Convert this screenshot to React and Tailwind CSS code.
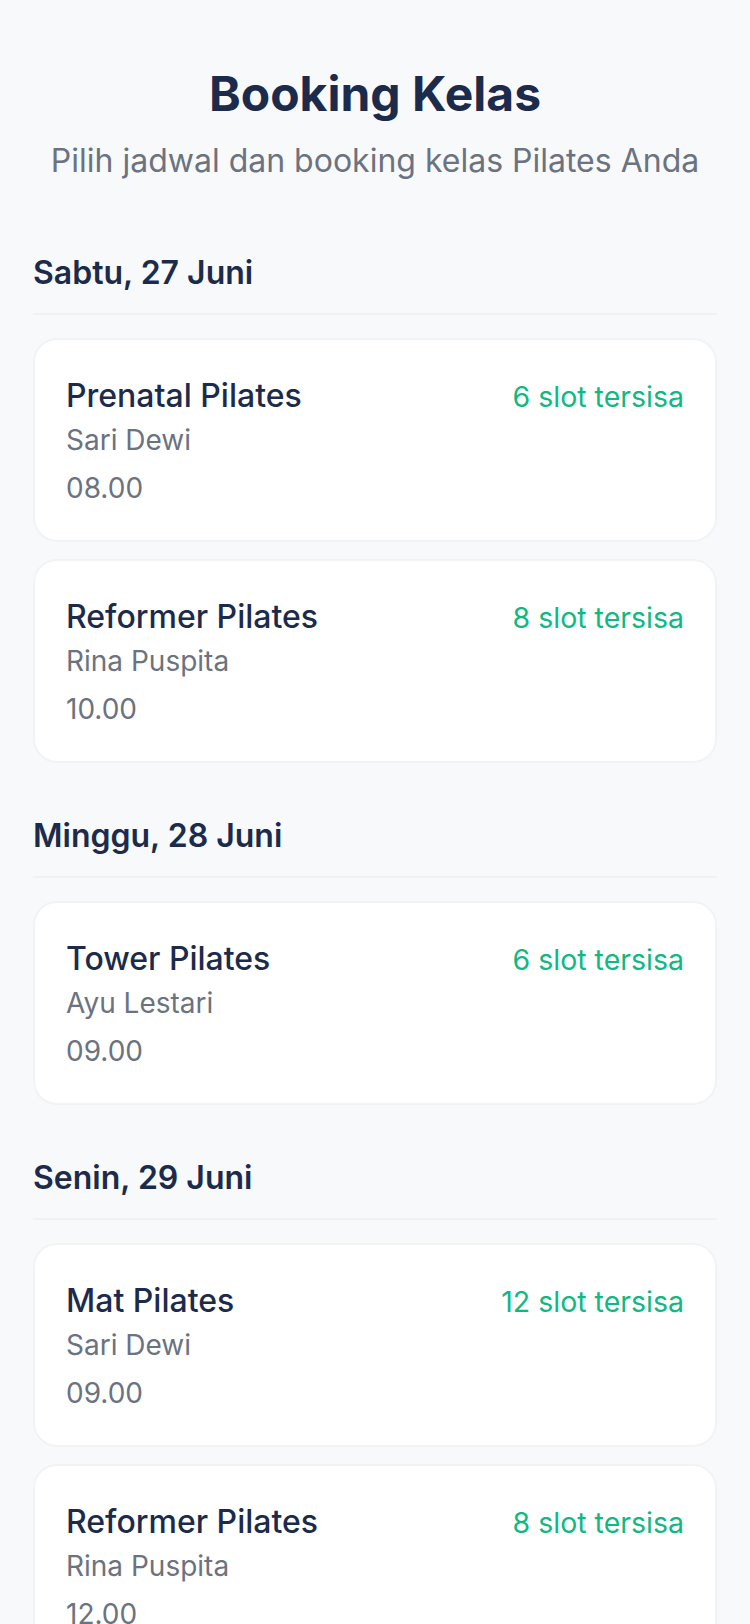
const schedule = [
    {
        date: "Sabtu, 27 Juni",
        classes: [
            { name: "Prenatal Pilates", instructor: "Sari Dewi", time: "08.00", slots: 6 },
            { name: "Reformer Pilates", instructor: "Rina Puspita", time: "10.00", slots: 8 },
        ],
    },
    {
        date: "Minggu, 28 Juni",
        classes: [
            { name: "Tower Pilates", instructor: "Ayu Lestari", time: "09.00", slots: 6 },
        ],
    },
    {
        date: "Senin, 29 Juni",
        classes: [
            { name: "Mat Pilates", instructor: "Sari Dewi", time: "09.00", slots: 12 },
            { name: "Reformer Pilates", instructor: "Rina Puspita", time: "12.00", slots: 8 },
        ],
    },
];

function ClassCard({ item }) {
    return (
        <div className="bg-white border-2 border-[#f1f3f5] rounded-[24px] px-[31px] py-[32px]">
            <div className="flex items-baseline justify-between">
                <h3 className="text-[32px] leading-[48px] font-medium text-[#1c2b4b]">
                    {item.name}
                </h3>
                <span className="text-[28.5px] leading-none text-[#10b981]">
                    {item.slots} slot tersisa
                </span>
            </div>
            <p className="text-[28px] leading-[40px] text-[#6b7280]">
                {item.instructor}
            </p>
            <p className="mt-2 text-[28px] leading-[40px] text-[#6b7280]">
                {item.time}
            </p>
        </div>
    );
}

export default function App() {
    return (
        <div className="min-h-screen bg-[#f8f9fb] px-[33px] pt-[65px] pb-16 font-['Inter',sans-serif]">
            <div className="text-center">
                <h1 className="text-[48px] leading-[58px] font-bold text-[#1c2b4b]">
                    Booking Kelas
                </h1>
                <p className="mt-[14px] text-[32px] leading-[48px] text-[#6b7280]">
                    Pilih jadwal dan booking kelas Pilates Anda
                </p>
            </div>

            <div className="mt-[64px] flex flex-col gap-[49px]">
                {schedule.map((day) => (
                    <section key={day.date}>
                        <h2 className="pb-4 border-b-2 border-[#f0f1f4] text-[32px] leading-[48px] font-semibold text-[#1c2b4b]">
                            {day.date}
                        </h2>
                        <div className="mt-[23px] flex flex-col gap-[17px]">
                            {day.classes.map((item) => (
                                <ClassCard key={item.name + item.time} item={item} />
                            ))}
                        </div>
                    </section>
                ))}
            </div>
        </div>
    );
}
